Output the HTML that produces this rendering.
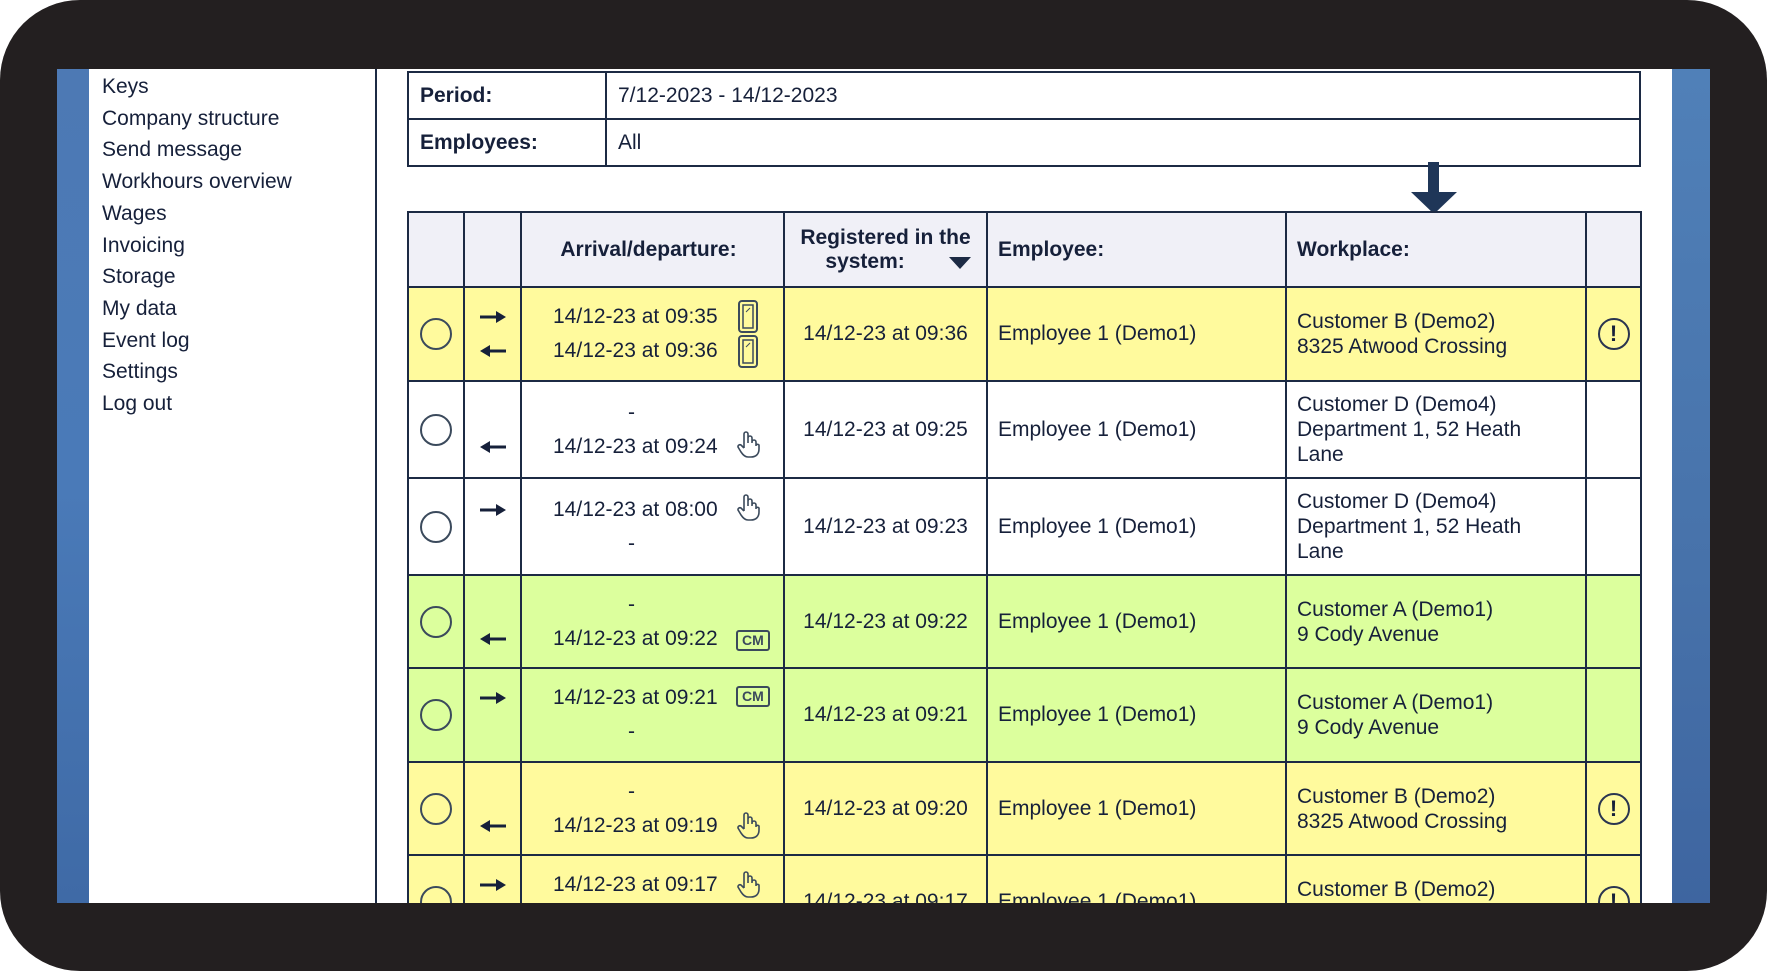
<!DOCTYPE html>
<html><head><meta charset="utf-8">
<style>
*{margin:0;padding:0;box-sizing:border-box}
html,body{width:1767px;height:971px;overflow:hidden;background:#fff;font-family:"Liberation Sans",Arial,sans-serif;color:#16203a}
#frame{position:absolute;left:0;top:0;width:1767px;height:971px;background:#231f20;border-radius:80px}
#screen{position:absolute;left:57px;top:69px;width:1653px;height:834px;background:#fff;overflow:hidden}
.blueL{position:absolute;left:0;top:0;width:32px;height:834px;background:linear-gradient(#4d79b4,#4a7ab8 50%,#3f6aa6)}
.blueR{position:absolute;left:1615px;top:0;width:38px;height:834px;background:linear-gradient(#5080b8,#4772aa 60%,#3e65a0)}
.sb{position:absolute;left:318px;top:0;width:2px;height:834px;background:#1c2a44}
.menu{position:absolute;left:45px;top:2px;font-size:21px;line-height:31.7px;color:#16203a}
table{border-collapse:collapse;position:absolute;table-layout:fixed}
td,th{border:2px solid #1c2a44;font-size:21px}
#per{left:350px;top:2px;width:1234px}
#per td{height:47px;padding-left:11px}
#per td.l{font-weight:bold;width:198px}
#main{left:350px;top:142px;width:1233px}
#main th{background:#f0f0f7;height:75px;font-weight:bold;text-align:left;padding-left:10px;line-height:24px}
#main td{vertical-align:middle;position:relative}
.y td{background:#fffa9d}
.g td{background:#dcff9d}
.w td{background:#fff}
.rad{width:32px;height:32px;border:2px solid #3b4a5c;border-radius:50%;margin-left:11px}
.arr{text-align:center;line-height:34px}
.arr svg{vertical-align:middle}
.ad{line-height:34px;padding-left:31px}
.ic{position:absolute;left:214px}
.reg{text-align:center}
.emp{padding-left:10px}
.wp{padding-left:10px;line-height:25px}
.ex{width:32px;height:32px;border:2px solid #2a3550;border-radius:50%;margin:0 auto;text-align:center;font-weight:bold;font-size:22px;line-height:28px}
.cm{display:inline-block;border:2px solid #3b4a5c;border-radius:3px;font-size:14px;font-weight:bold;padding:0 4px;line-height:17px;color:#3b4a5c}
</style></head><body>
<div id="frame"></div>
<div id="screen">
<div class="blueL"></div><div class="blueR"></div><div class="sb"></div>
<div class="menu">Keys<br>Company structure<br>Send message<br>Workhours overview<br>Wages<br>Invoicing<br>Storage<br>My data<br>Event log<br>Settings<br>Log out</div>
<table id="per"><tr><td class="l">Period:</td><td>7/12-2023 - 14/12-2023</td></tr><tr><td class="l">Employees:</td><td>All</td></tr></table>
<svg style="position:absolute;left:1352px;top:93px" width="50" height="54"><rect x="19" y="0" width="11" height="34" fill="#1f3658"/><polygon points="2,30 48,30 25,52" fill="#1f3658"/></svg>
<table id="main">
<colgroup><col style="width:56px"><col style="width:57px"><col style="width:263px"><col style="width:203px"><col style="width:299px"><col style="width:300px"><col style="width:55px"></colgroup>
<tr><th></th><th></th><th style="text-align:center;padding:0 8px 0 0">Arrival/departure:</th><th style="text-align:center;padding:0;position:relative">Registered in the<br>system:&nbsp;&nbsp;&nbsp;&nbsp;&nbsp;&nbsp;&nbsp;<svg style="position:absolute;left:164px;top:44px" width="22" height="13"><polygon points="0,0 22,0 11,12" fill="#1c2a44"/></svg></th><th>Employee:</th><th>Workplace:</th><th></th></tr>
<tr class="y" style="height:94px"><td><div class="rad"></div></td><td class="arr"><svg width="26" height="14"><rect x="0" y="5.5" width="18" height="3" fill="#16203a"/><polygon points="16,1 26,7 16,13" fill="#16203a"/></svg><br><svg width="26" height="14"><rect x="8" y="5.5" width="18" height="3" fill="#16203a"/><polygon points="10,1 0,7 10,13" fill="#16203a"/></svg></td><td class="ad">14/12-23 at 09:35<br>14/12-23 at 09:36
<svg class="ic" style="top:12px" width="24" height="70"><rect x="3" y="1" width="18" height="31" rx="3" fill="none" stroke="#3b4a5c" stroke-width="2"/><rect x="7" y="5" width="10" height="23" fill="none" stroke="#3b4a5c" stroke-width="1.5"/><line x1="10" y1="12" x2="14" y2="8" stroke="#3b4a5c"/><rect x="3" y="36" width="18" height="31" rx="3" fill="none" stroke="#3b4a5c" stroke-width="2"/><rect x="7" y="40" width="10" height="23" fill="none" stroke="#3b4a5c" stroke-width="1.5"/><line x1="10" y1="47" x2="14" y2="43" stroke="#3b4a5c"/></svg></td><td class="reg">14/12-23 at 09:36</td><td class="emp">Employee 1 (Demo1)</td><td class="wp">Customer B (Demo2)<br>8325 Atwood Crossing</td><td><div class="ex">!</div></td></tr>
<tr class="w" style="height:97px"><td><div class="rad"></div></td><td class="arr">&nbsp;<br><svg width="26" height="14"><rect x="8" y="5.5" width="18" height="3" fill="#16203a"/><polygon points="10,1 0,7 10,13" fill="#16203a"/></svg></td><td class="ad"><span style="padding-left:75px">-</span><br>14/12-23 at 09:24<svg class="ic" style="top:48px" width="24" height="28"><path d="M8 18V4a2 2 0 014 0v9M12 12V8a2 2 0 014 0v5M16 12a2 2 0 014 0v4M20 15a2 2 0 013 0v4c0 5-3 8-8 8h-3c-3 0-5-2-7-5l-3-5a2 2 0 013-2l3 3" fill="none" stroke="#3b4a5c" stroke-width="1.6"/></svg></td><td class="reg">14/12-23 at 09:25</td><td class="emp">Employee 1 (Demo1)</td><td class="wp">Customer D (Demo4)<br>Department 1, 52 Heath<br>Lane</td><td></td></tr>
<tr class="w" style="height:97px"><td><div class="rad"></div></td><td class="arr"><svg width="26" height="14"><rect x="0" y="5.5" width="18" height="3" fill="#16203a"/><polygon points="16,1 26,7 16,13" fill="#16203a"/></svg><br>&nbsp;</td><td class="ad">14/12-23 at 08:00<br><span style="padding-left:75px">-</span><svg class="ic" style="top:14px" width="24" height="28"><path d="M8 18V4a2 2 0 014 0v9M12 12V8a2 2 0 014 0v5M16 12a2 2 0 014 0v4M20 15a2 2 0 013 0v4c0 5-3 8-8 8h-3c-3 0-5-2-7-5l-3-5a2 2 0 013-2l3 3" fill="none" stroke="#3b4a5c" stroke-width="1.6"/></svg></td><td class="reg">14/12-23 at 09:23</td><td class="emp">Employee 1 (Demo1)</td><td class="wp">Customer D (Demo4)<br>Department 1, 52 Heath<br>Lane</td><td></td></tr>
<tr class="g" style="height:93px"><td><div class="rad"></div></td><td class="arr">&nbsp;<br><svg width="26" height="14"><rect x="8" y="5.5" width="18" height="3" fill="#16203a"/><polygon points="10,1 0,7 10,13" fill="#16203a"/></svg></td><td class="ad"><span style="padding-left:75px">-</span><br>14/12-23 at 09:22<span class="ic cm" style="top:54px">CM</span></td><td class="reg">14/12-23 at 09:22</td><td class="emp">Employee 1 (Demo1)</td><td class="wp">Customer A (Demo1)<br>9 Cody Avenue</td><td></td></tr>
<tr class="g" style="height:94px"><td><div class="rad"></div></td><td class="arr"><svg width="26" height="14"><rect x="0" y="5.5" width="18" height="3" fill="#16203a"/><polygon points="16,1 26,7 16,13" fill="#16203a"/></svg><br>&nbsp;</td><td class="ad">14/12-23 at 09:21<br><span style="padding-left:75px">-</span><span class="ic cm" style="top:17px">CM</span></td><td class="reg">14/12-23 at 09:21</td><td class="emp">Employee 1 (Demo1)</td><td class="wp">Customer A (Demo1)<br>9 Cody Avenue</td><td></td></tr>
<tr class="y" style="height:93px"><td><div class="rad"></div></td><td class="arr">&nbsp;<br><svg width="26" height="14"><rect x="8" y="5.5" width="18" height="3" fill="#16203a"/><polygon points="10,1 0,7 10,13" fill="#16203a"/></svg></td><td class="ad"><span style="padding-left:75px">-</span><br>14/12-23 at 09:19<svg class="ic" style="top:48px" width="24" height="28"><path d="M8 18V4a2 2 0 014 0v9M12 12V8a2 2 0 014 0v5M16 12a2 2 0 014 0v4M20 15a2 2 0 013 0v4c0 5-3 8-8 8h-3c-3 0-5-2-7-5l-3-5a2 2 0 013-2l3 3" fill="none" stroke="#3b4a5c" stroke-width="1.6"/></svg></td><td class="reg">14/12-23 at 09:20</td><td class="emp">Employee 1 (Demo1)</td><td class="wp">Customer B (Demo2)<br>8325 Atwood Crossing</td><td><div class="ex">!</div></td></tr>
<tr class="y" style="height:93px"><td><div class="rad"></div></td><td class="arr"><svg width="26" height="14"><rect x="0" y="5.5" width="18" height="3" fill="#16203a"/><polygon points="16,1 26,7 16,13" fill="#16203a"/></svg><br>&nbsp;</td><td class="ad">14/12-23 at 09:17<br>&nbsp;<svg class="ic" style="top:14px" width="24" height="28"><path d="M8 18V4a2 2 0 014 0v9M12 12V8a2 2 0 014 0v5M16 12a2 2 0 014 0v4M20 15a2 2 0 013 0v4c0 5-3 8-8 8h-3c-3 0-5-2-7-5l-3-5a2 2 0 013-2l3 3" fill="none" stroke="#3b4a5c" stroke-width="1.6"/></svg></td><td class="reg">14/12-23 at 09:17</td><td class="emp">Employee 1 (Demo1)</td><td class="wp">Customer B (Demo2)<br>&nbsp;</td><td><div class="ex">!</div></td></tr>
</table>
</div>
</body></html>
